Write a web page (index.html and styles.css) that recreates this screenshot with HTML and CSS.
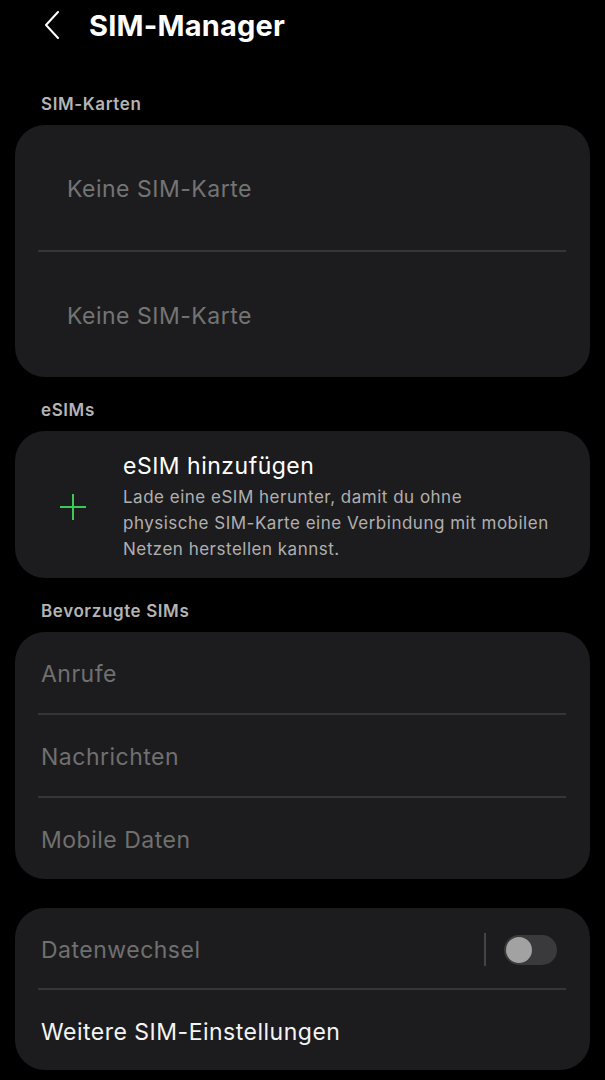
FILE: index.html
```html
<html lang="de">
<head>
  <meta charset="UTF-8">
  <meta name="viewport" content="width=device-width, initial-scale=1.0">
  <title>SIM-Manager</title>
  <link rel="stylesheet" href="styles.css">
</head>

<body>
  <div class="header">
    <svg class="back" width="16" height="28" viewBox="0 0 16 28">
      <path d="M14 1 L2 14 L14 27" fill="none" stroke="#fff" stroke-width="2" stroke-linecap="round" stroke-linejoin="round"/>
    </svg>
    <h1>SIM-Manager</h1>
  </div>

  <div class="section-label first">SIM-Karten</div>
  <div class="card">
    <div class="sim-row">Keine SIM-Karte</div>
    <div class="divider"></div>
    <div class="sim-row">Keine SIM-Karte</div>
  </div>

  <div class="section-label">eSIMs</div>
  <div class="card esim">
    <svg class="plus" width="30" height="30" viewBox="0 0 30 30">
      <path d="M15 2 V28 M2 15 H28" stroke="#3ec85a" stroke-width="2"/>
    </svg>
    <div class="esim-text">
      <div class="esim-title">eSIM hinzufügen</div>
      <div class="esim-desc">Lade eine eSIM herunter, damit du ohne<br>physische SIM-Karte eine Verbindung mit mobilen<br>Netzen herstellen kannst.</div>
    </div>
  </div>

  <div class="section-label">Bevorzugte SIMs</div>
  <div class="card">
    <div class="row dim">Anrufe</div>
    <div class="divider"></div>
    <div class="row dim">Nachrichten</div>
    <div class="divider"></div>
    <div class="row dim">Mobile Daten</div>
  </div>

  <div class="card last">
    <div class="row dim switch-row">
      <span class="row-label">Datenwechsel</span>
      <span class="switch-sep"></span>
      <span class="switch"><span class="knob"></span></span>
    </div>
    <div class="divider"></div>
    <div class="row">Weitere SIM-Einstellungen</div>
  </div>
</body>
</html>
```

FILE: styles.css
```css
body {
  font-family: Inter, Roboto, sans-serif;
  margin: 0;
  padding: 0;
  background-color: #000;
  color: #fff;
  width: 605px;
}

.header {
  display: flex;
  align-items: center;
  height: 50px;
  padding-left: 44px;
}

.header h1 {
  margin: 0 0 0 29px;
  font-size: 29px;
  font-weight: 700;
  letter-spacing: 0.2px;
}

.section-label {
  font-size: 17px;
  font-weight: 600;
  line-height: 20px;
  letter-spacing: 0.6px;
  color: #b4b4b4;
  padding: 23px 0 11px 41px;
}

.section-label.first {
  padding-top: 44px;
}

.card {
  background-color: #1c1c1e;
  border-radius: 30px;
  margin: 0 15px;
}

.card.last {
  margin-top: 29px;
}

.divider {
  height: 2px;
  background-color: #353537;
  margin: 0 24px 0 23px;
}

.sim-row {
  height: 125px;
  box-sizing: border-box;
  padding: 2px 0 0 52px;
  display: flex;
  align-items: center;
  font-size: 23px;
  letter-spacing: 0.5px;
  color: #747474;
}

.row {
  height: 81px;
  box-sizing: border-box;
  padding: 3px 0 0 26px;
  display: flex;
  align-items: center;
  font-size: 23px;
  letter-spacing: 0.5px;
  color: #f4f4f4;
}

.last .row {
  height: 80px;
}

.row.dim {
  color: #707070;
}

.row-label {
  flex: 1;
}

.switch-sep {
  width: 2px;
  height: 33px;
  background-color: #444446;
  margin-right: 18px;
}

.switch {
  width: 53px;
  height: 30px;
  border-radius: 15px;
  background-color: #3a3a3c;
  margin-right: 33px;
  display: flex;
  align-items: center;
  padding-left: 2px;
  box-sizing: border-box;
}

.knob {
  width: 26px;
  height: 26px;
  border-radius: 50%;
  background-color: #a2a2a2;
}

.esim {
  display: flex;
  align-items: center;
  padding: 20px 20px 16px 43px;
}

.plus {
  flex: none;
  margin-right: 35px;
}

.esim-title {
  font-size: 23px;
  line-height: 30px;
  letter-spacing: 0.5px;
  color: #fff;
}

.esim-desc {
  margin-top: 3px;
  font-size: 17px;
  line-height: 26px;
  letter-spacing: 0.5px;
  color: #b0b0b0;
  white-space: nowrap;
}
```
